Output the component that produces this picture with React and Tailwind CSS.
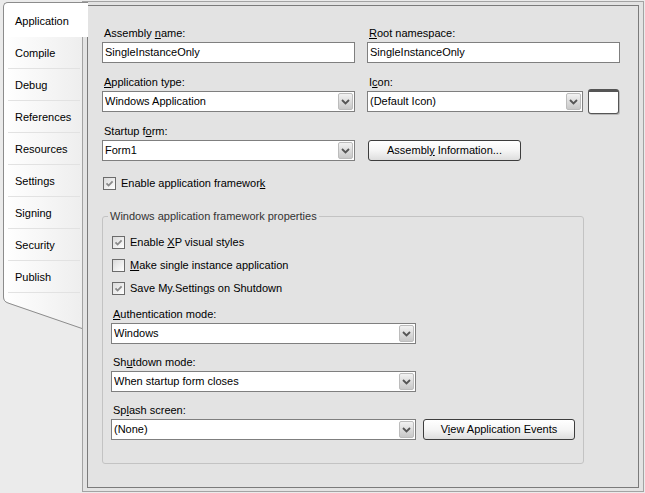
const TABS = ['Compile', 'Debug', 'References', 'Resources', 'Settings', 'Signing', 'Security', 'Publish']

const U = ({ children }) => <span className="underline underline-offset-[1px]">{children}</span>

function Arrow() {
  return (
    <span className="flex h-[17px] w-[15px] shrink-0 items-center justify-center rounded-[2px] border border-[#bcbcbc] bg-linear-to-b from-[#f2f2f2] to-[#c8c8c8]">
      <svg width="9" height="6" viewBox="0 0 9 6">
        <path d="M1 1 L4.5 4.5 L8 1" fill="none" stroke="#555" strokeWidth="1.8" />
      </svg>
    </span>
  )
}

function Combo({ value, className = '' }) {
  return (
    <div className={`flex h-[21px] items-center border border-[#7f7f7f] bg-white pl-[2px] pr-[1px] ${className}`}>
      <span className="flex-1 truncate">{value}</span>
      <Arrow />
    </div>
  )
}

function TextBox({ value }) {
  return <div className="flex h-[21px] items-center border border-[#7f7f7f] bg-white pl-[2px]">{value}</div>
}

function Button({ children, className = '' }) {
  return (
    <div
      className={`flex h-[21px] items-center justify-center rounded-[3px] border border-[#3d3d3d] bg-linear-to-b from-white via-[#f5f5f5] to-[#dedede] ${className}`}
    >
      {children}
    </div>
  )
}

function Check({ checked, children }) {
  return (
    <div className="flex h-[18px] items-center gap-[5px] pl-[1px]">
      <span className="flex h-[13px] w-[13px] shrink-0 items-center justify-center border border-[#6b6b6b] bg-linear-to-br from-[#dadada] to-white">
        {checked && (
          <svg width="11" height="11" viewBox="0 0 11 11">
            <path d="M2.5 5.3 L4.6 7.5 L8.6 3.3" fill="none" stroke="#8a8a8a" strokeWidth="1.8" />
          </svg>
        )}
      </span>
      <span>{children}</span>
    </div>
  )
}

function Field({ label, children }) {
  return (
    <div>
      <div className="h-[13px] pl-[2px]">{label}</div>
      <div className="mt-[2px]">{children}</div>
    </div>
  )
}

function TabStrip() {
  return (
    <div className="flex w-[82px] shrink-0 flex-col pt-[2px]">
      <div className="relative z-10 ml-[3px] flex h-[35px] w-[85px] items-center rounded-tl-[5px] border-l border-t border-[#8c8c8c] bg-white pl-[11px] pt-[2px]">
        Application
      </div>
      <div className="ml-[3px] w-[79px] border-l border-[#8c8c8c] bg-linear-to-r from-white to-[#eeeeee]">
        {TABS.map((t) => (
          <div key={t}>
            <div className="flex h-[31px] items-center pl-[11px] pt-[1px]">{t}</div>
            <div className="ml-[4px] mr-[2px] h-px bg-[#e2e2e2]" />
          </div>
        ))}
      </div>
      <svg width="82" height="36" className="block">
        <defs>
          <linearGradient id="strip" x1="0" x2="1" y1="0" y2="0">
            <stop offset="0" stopColor="#ffffff" />
            <stop offset="1" stopColor="#eeeeee" />
          </linearGradient>
        </defs>
        <path d="M4 0 V4 Q4 8 8 9.5 L82 35 V0 Z" fill="url(#strip)" />
        <path d="M3.5 0 V4 Q3.5 8.5 8 10 L82 35.5" fill="none" stroke="#8c8c8c" strokeWidth="1" />
      </svg>
    </div>
  )
}

export default function App() {
  return (
    <div className="flex h-[493px] w-[645px] items-start overflow-hidden bg-[#ebebeb] font-['Liberation_Sans',Arial,sans-serif] text-[11px] leading-[13px] text-black">
      <TabStrip />
      <div className="mt-[1px] flex h-[491px] w-[562px] shrink-0 border border-[#a3a3a3] bg-[#e3e3e3] px-[4px] py-[3px]">
        <div className="flex-1 border border-[#7b7b7b] pl-[14px] pt-[21px]">
          <div className="grid grid-cols-[253px_253px] gap-x-[12px] gap-y-[13px]">
            <Field label={<>Assembly <U>n</U>ame:</>}>
              <TextBox value="SingleInstanceOnly" />
            </Field>
            <Field label={<><U>R</U>oot namespace:</>}>
              <TextBox value="SingleInstanceOnly" />
            </Field>
            <Field label={<><U>A</U>pplication type:</>}>
              <Combo value="Windows Application" />
            </Field>
            <Field label={<>I<U>c</U>on:</>}>
              <div className="flex h-[21px] items-center">
                <Combo value="(Default Icon)" className="w-[216px]" />
                <div className="ml-[5px] h-[25px] w-[31px] shrink-0 rounded-[3px] border border-t-[3px] border-[#555] bg-white shadow-[1px_1px_0_#b8b8b8]" />
              </div>
            </Field>
            <Field label={<>Startup f<U>o</U>rm:</>}>
              <Combo value="Form1" />
            </Field>
            <Field label="">
              <Button className="ml-[1px] w-[153px]">
                <span>
                  Assembl<U>y</U> Information...
                </span>
              </Button>
            </Field>
          </div>

          <div className="mt-[13px]">
            <Check checked>
              Enable application framewor<U>k</U>
            </Check>
          </div>

          <fieldset className="mt-[17px] w-[482px] rounded-[3px] border border-[#c3c3c3] pb-[23px]">
            <legend className="ml-[5px] px-[2px] leading-[14px] text-[#333]">Windows application framework properties</legend>
            <div className="flex flex-col pl-[8px] pt-[10px]">
              <div className="flex flex-col gap-[5px]">
                <Check checked>
                  Enable <U>X</U>P visual styles
                </Check>
                <Check>
                  <U>M</U>ake single instance application
                </Check>
                <Check checked>
                  Save My.Settin<U>g</U>s on Shutdown
                </Check>
              </div>
              <div className="mt-[11px] flex flex-col gap-[12px]">
                <Field label={<><U>A</U>uthentication mode:</>}>
                  <Combo value="Windows" className="w-[305px]" />
                </Field>
                <Field label={<>Sh<U>u</U>tdown mode:</>}>
                  <Combo value="When startup form closes" className="w-[305px]" />
                </Field>
                <Field label={<>Sp<U>l</U>ash screen:</>}>
                  <div className="flex items-center">
                    <Combo value="(None)" className="w-[305px]" />
                    <Button className="ml-[7px] w-[152px]">
                      <span>
                        V<U>i</U>ew Application Events
                      </span>
                    </Button>
                  </div>
                </Field>
              </div>
            </div>
          </fieldset>
        </div>
      </div>
    </div>
  )
}
